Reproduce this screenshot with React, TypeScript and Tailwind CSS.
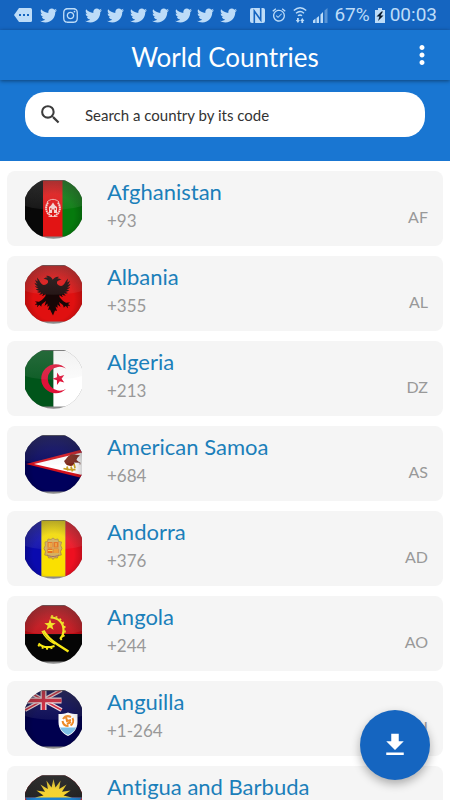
import { useId, useState } from "react";
import type { ReactNode } from "react";
import { FaInstagram, FaTwitter } from "react-icons/fa";
import { MdAlarmOn, MdMoreVert, MdSearch } from "react-icons/md";

interface Country {
  name: string;
  dial: string;
  code: string;
  flag: ReactNode;
}

const star = (cx: number, cy: number, r: number, turn = -90, points = 5, inner = 0.4) =>
  Array.from({ length: points * 2 }, (_, i) => {
    const a = ((turn + (i * 180) / points) * Math.PI) / 180;
    const d = i % 2 ? r * inner : r;
    return `${(cx + d * Math.cos(a)).toFixed(2)},${(cy + d * Math.sin(a)).toFixed(2)}`;
  }).join(" ");

const afghanistan = (
  <>
    <path fill="#080808" d="M0 0h18v58H0z" />
    <path fill="#e21414" d="M18 0h20v58H18z" />
    <path fill="#067a0d" d="M37.500 0H57v58H37.500z" />
    <g fill="none" stroke="#f6d5d2">
      <path strokeWidth="2" strokeDasharray="1.600 .5" d="M23 22.500c-3.500 5-2 11.500 4 13.500M33 22.500c3.500 5 2 11.500-4 13.500" />
      <path strokeWidth=".8" d="M22 22c3.500-3.500 8.500-3.500 12 0M23.500 36.500h9" />
    </g>
    <path fill="#f6d5d2" d="M24 33v-6l2-1.500 2-3 2 3 2 1.500v6z" />
    <path fill="#d42a25" d="M27 33v-3.500h2V33zM25.200 28h1.200v2h-1.200zM29.700 28h1.200v2h-1.200z" />
  </>
);

const albania = (
  <>
    <path fill="#e01010" d="M0 0h57v58H0z" />
    <path
      fill="#170606"
      d="M28 15c-2-4-5-4.500-7-4 1 .5 1.500 1 1.500 1.500-1.500-.3-3 .2-4 1.500 2 0 4 .5 4.500 2 .5 2-1 3.500-4 4-3.500-.5-4-4.500-7-7.500.2 2 .5 3 1 4-1.200-.5-2-1-2.800-2 .2 2 1 3.200 2.300 4.200-1.200 0-2-.4-3-1 .6 1.800 1.700 2.900 3.300 3.500-1.200.3-2 .2-3-.1 1.100 1.500 2.300 2.300 3.800 2.500-1 .5-1.800.7-3 .7 1.300 1.100 2.700 1.500 4 1.300-.8.8-1.500 1.200-2.600 1.500 1.400.7 2.900.7 4.100.2-.4 1-1 1.600-1.900 2.200 1.500.2 2.800-.2 3.900-1.100-.1 1-.4 1.700-1 2.500 1.400-.2 2.500-.9 3.300-2l.1 2c-2 2.500-3.500 4.500-6 5.600-1.800.6-3-.3-4.500.2 1 .3 1.500.8 2 1.500-1.100.2-1.700.8-2 2 1-.6 1.800-.6 2.600-.2-.5.7-.6 1.400-.2 2.300.6-1.200 1.300-1.800 2.400-2.200.3.7.8 1.200 1.700 1.400-.3-1.400.2-2.300 1.500-3.200l3-2.300-1.500 5 3-2.500v3.500l2-1.500-1.500 4.500 2-.5L28 50.500l2-5 2 .5-1.500-4.500 2 1.500v-3.500l3 2.500-1.500-5 3 2.300c1.300.9 1.800 1.800 1.500 3.200.9-.2 1.400-.7 1.700-1.400 1.100.4 1.800 1 2.400 2.200.4-.9.3-1.600-.2-2.300.8-.4 1.600-.4 2.600.2-.3-1.200-.9-1.800-2-2 .5-.7 1-1.200 2-1.500-1.500-.5-2.700.4-4.500-.2-2.500-1.100-4-3.100-6-5.600l.1-2c.8 1.100 1.900 1.800 3.300 2-.6-.8-.9-1.500-1-2.500 1.100.9 2.400 1.300 3.900 1.100-.9-.6-1.500-1.200-1.900-2.200 1.200.5 2.700.5 4.100-.2-1.100-.3-1.800-.7-2.600-1.500 1.300.2 2.700-.2 4-1.300-1.200 0-2-.2-3-.7 1.500-.2 2.700-1 3.800-2.500-1 .3-1.800.4-3 .1 1.600-.6 2.700-1.700 3.300-3.500-1 .6-1.800 1-3 1 1.300-1 2.100-2.200 2.300-4.200-.8 1-1.600 1.500-2.800 2 .5-1 .8-2 1-4-3 3-3.500 7-7 7.500-3-.5-4.500-2-4-4 .5-1.500 2.500-2 4.500-2-1-1.300-2.500-1.800-4-1.500 0-.5.500-1 1.500-1.500-2-.5-5 0-7 4z"
    />
  </>
);

const algeria = (
  <>
    <path fill="#00551a" d="M0 0h28.500v58H0z" />
    <path fill="#fff" d="M28.500 0H57v58H28.500z" />
    <path fill="#df1238" d="M41 18.500A14.500 14.500 0 1 0 41 39 12 12 0 1 1 41 18.500z" />
    <polygon fill="#df1238" points={star(34, 28.800, 6.500, 180)} />
  </>
);

const americanSamoa = (
  <>
    <path fill="#00005c" d="M0 0h57v58H0z" />
    <path fill="#d4111c" d="M1 29 57 14.500v28.500z" />
    <path fill="#fff" d="M9 29 57 17.500v22.500z" />
    <path fill="#7a2416" d="M39 26c2-1 3-5 7-6.500 3-.5 6 .5 9 1-2 1.500-3 2.500-3.500 4.500l2.500 2-4 .5c-1 2-2 3.500-4.500 3.500l-3-.8c-1.500-.2-2-1.500-3.500-4.200z" />
    <path fill="none" stroke="#c7a024" strokeWidth="1.800" d="M38.500 33.500c3 1 7 1.500 12 1M42 31.500l1 4M46 31.500l1.500 5M49 29l1 4" />
    <path stroke="#9f7b76" strokeWidth="1" d="M49 27.500h6v2" fill="none" />
  </>
);

const andorra = (
  <>
    <path fill="#0a0aae" d="M0 0h16.500v58H0z" />
    <path fill="#fae000" d="M16.500 0h24v58h-24z" />
    <path fill="#ee1020" d="M40.500 0H57v58H40.500z" />
    <path
      fill="#d6b15e"
      stroke="#a98542"
      strokeWidth=".8"
      d="M20 22l2.500-.5.5-2.500 3 .5 2-1.500 2 1.500 3-.5.5 2.500 3 .5-.8 3.500 1.300 3-1.500 3 .8 3.500-3 .5-1 2.500-2.500-.3-1.800 1.600-1.800-1.600-2.500.3-1-2.500-3-.5.8-3.500-1.500-3 1.300-3z"
    />
    <path fill="#e8701a" d="M22.500 22h5v5.500h-5zM28.500 22h5v5.500h-5zM22.500 28.500h5v4.500h-5zM28.500 28.500h5v4.500h-5z" />
    <path fill="none" stroke="#fbe65c" strokeWidth=".8" d="M24.200 23v4M26 23v4M23 30.500h4.500M29 30h4M29 32h4M31 23v3.500" />
    <path fill="none" stroke="#9a6f6b" strokeWidth="1" d="M22 35c4 2 8 2 12 0" />
  </>
);

const angola = (
  <>
    <path fill="#c40c14" d="M0 0h57v29H0z" />
    <path fill="#050505" d="M0 29h57v29H0z" />
    <g fill="none" stroke="#f8e814">
      <path strokeWidth="2.200" d="M25.500 12.500C34 12.500 39 18.500 38.500 26c-.2 3-1.200 6-3.500 8" />
      <path strokeWidth="1.600" strokeDasharray="2 2.500" d="M26 11c9 0 14.500 7 14 15-.2 4-2 7-4.500 9" />
      <path strokeWidth="2.200" d="M13.500 38.500c4 4 10 4.500 16 2.500" />
      <path strokeWidth="1.600" strokeDasharray="2 2.500" d="M13 40c4 4 10 5 16 2.500" />
      <path strokeWidth="2.400" d="M18.500 25.500c3 6 8 10 14 14l11 7" />
      <path strokeWidth="1.400" d="M17 26c3 7 7 10 13 13" />
    </g>
    <polygon fill="#f8e814" points={star(25, 20, 6)} />
  </>
);

const anguilla = (
  <>
    <path fill="#00004f" d="M0 0h57v58H0z" />
    <g fill="none">
      <path stroke="#f5dfe2" strokeWidth="4" d="M0 0l36.500 20M36.500 0L0 20" />
      <path stroke="#d51b32" strokeWidth="1.500" d="M0 0l36.500 20M36.500 0L0 20" />
      <path stroke="#f5dfe2" strokeWidth="6" d="M18.500 0v20M0 10.500h36.500" />
      <path stroke="#d51b32" strokeWidth="3.400" d="M18.500 0v20M0 10.500h36.500" />
    </g>
    <path fill="#fff" d="M33.500 24c3.500 0 6.500-.5 9.500-1.500 3 1 6 1.500 9.500 1.500v8c0 7-4 11.500-9.500 14-5.500-2.500-9.500-7-9.500-14z" />
    <path fill="#7dc0e8" d="M35 37.500h16c-1.500 3.500-4.500 6-8 7.500-3.500-1.500-6.500-4-8-7.500z" />
    <path fill="none" stroke="#ee8a28" strokeWidth="2" d="M38 29c2-3 5-3.500 8-2M47.500 28c1.500 3 .5 6-2 7.500M43.500 36c-3.500 0-5.500-2-6-5M41 27l1 4 4-1M46 32l-4 2" />
  </>
);

const antigua = (
  <>
    <path fill="#e01a2b" d="M0 0h57v58H0z" />
    <path fill="#111" d="M0 0h57v22.500H0z" />
    <polygon fill="#fbd51c" points={star(28.500, 22.500, 18.500, -90, 16, 0.55)} />
    <path fill="#0c7bd0" d="M0 22.500h57l-10 14H10z" />
    <path fill="#fff" d="M10 36.500h37L28.500 58z" />
  </>
);

const countries: Country[] = [
  { name: "Afghanistan", dial: "+93", code: "AF", flag: afghanistan },
  { name: "Albania", dial: "+355", code: "AL", flag: albania },
  { name: "Algeria", dial: "+213", code: "DZ", flag: algeria },
  { name: "American Samoa", dial: "+684", code: "AS", flag: americanSamoa },
  { name: "Andorra", dial: "+376", code: "AD", flag: andorra },
  { name: "Angola", dial: "+244", code: "AO", flag: angola },
  { name: "Anguilla", dial: "+1-264", code: "AI", flag: anguilla },
  { name: "Antigua and Barbuda", dial: "+1-268", code: "AG", flag: antigua },
];

// Glossy round badge, cut flat where the square flag image ends
function Flag({ children }: { children: ReactNode }) {
  const id = useId();
  return (
    <svg viewBox="0 0 57 59" className="mt-[2px] h-[59px] w-[57px] shrink-0" aria-hidden="true">
      <defs>
        <clipPath id={`${id}c`}>
          <circle cx="28.500" cy="28.500" r="30.300" />
        </clipPath>
        <linearGradient id={`${id}g`} x1="0" y1="0" x2="0" y2="1">
          <stop offset="0" stopColor="#bbb" stopOpacity=".2" />
          <stop offset="1" stopColor="#ccc" stopOpacity=".08" />
        </linearGradient>
        <radialGradient id={`${id}v`} cx=".5" cy=".6" r=".65">
          <stop offset=".55" stopColor="#000" stopOpacity="0" />
          <stop offset="1" stopColor="#000" stopOpacity=".35" />
        </radialGradient>
      </defs>
      <g clipPath={`url(#${id}c)`}>
        <path fill="#8b8b8b" d="M0 0h57v59H0z" />
        <svg width="57" height="56" y="0.500" viewBox="0 0.500 57 56">
          {children}
          {children !== algeria && <path fill={`url(#${id}v)`} d="M0 0h57v58H0z" />}
          <path fill={`url(#${id}g)`} d="M0 0h57v26c-18 5-40 5-57 0z" />
        </svg>
        <path stroke="#555" strokeOpacity=".6" d="M0 .5h57" />
      </g>
    </svg>
  );
}

function StatusBar() {
  return (
    <div className="flex h-[30px] shrink-0 items-center justify-between bg-[#1565c0] pl-[14px] pr-[13px] text-[#bddcf8]">
      <div className="flex w-[223px] items-center justify-between">
        <svg viewBox="0 0 18 14" className="mr-[2px] h-[14px] w-[18px]" aria-hidden="true">
          <path fill="currentColor" d="M5 0h11.500Q18 0 18 1.500v11q0 1.500-1.500 1.500H5L0 7z" />
          <path fill="#1565c0" d="M5 6h2v2H5zM9 6h2v2H9zM13 6h2v2h-2z" />
        </svg>
        <FaTwitter size={17} />
        <FaInstagram size={17} />
        {[1, 2, 3, 4, 5, 6, 7].map((n) => (
          <FaTwitter key={n} size={17} />
        ))}
      </div>
      <div className="flex items-center gap-[6px]">
        <svg viewBox="0 0 15 15" className="size-[15px]" aria-hidden="true">
          <rect width="15" height="15" rx="2" fill="currentColor" />
          <path fill="none" stroke="#1565c0" strokeWidth="1.600" d="M4.300 15V3l6.400 9V0" />
        </svg>
        <MdAlarmOn size={16} />
        <svg viewBox="0 0 14 16" className="h-4 w-[14px]" aria-hidden="true">
          <g fill="none" stroke="currentColor" strokeWidth="1.400">
            <path d="M.8 3.500c4-3.500 8.500-3.500 12.400 0M3 6.200c2.700-2.200 5.500-2.200 8 0M5 8.700c1.400-1 2.700-1 4 0" />
          </g>
          <path fill="currentColor" d="M4 11h1.800v2H7l-2.100 3-2.100-3H4zM8.400 16h1.800v-2h1.200L9.300 11l-2.100 3h1.200z" />
        </svg>
        <svg viewBox="0 0 15 15" className="size-[15px]" aria-hidden="true">
          <path fill="currentColor" d="M0 12.500L2.500 10.500V15H0zM3.500 10L6 8v7H3.500zM7.500 6.500L10 4v11H7.500z" />
          <path fill="currentColor" opacity=".4" d="M11.500 2.500L14.500 0v15h-3z" />
        </svg>
        <span className="flex items-center gap-[5px] font-[Roboto,sans-serif] text-[19px] leading-6">
          67%
          <svg viewBox="0 0 10 15" className="h-[15px] w-[10px]" aria-hidden="true">
            <path fill="currentColor" d="M3 0h4v2h3v13H0V2h3z" />
            <path fill="#06182c" d="M6.500 3.500L1.500 8.500h3L3 13l5.500-5.500h-3L8 3.500z" />
          </svg>
          00:03
        </span>
      </div>
    </div>
  );
}

export default function App() {
  const [query, setQuery] = useState("");
  const shown = countries.filter((c) => (c.dial + c.code).toLowerCase().includes(query.trim().toLowerCase()));

  return (
    <div className="relative flex h-screen flex-col overflow-hidden bg-white font-[Lato,sans-serif] [font-variant-ligatures:none]">
      <StatusBar />

      <header className="z-10 grid h-[50px] shrink-0 grid-cols-[40px_1fr_40px] items-center bg-[#1976d2] px-2 text-white shadow-[0_1px_4px_rgba(0,0,0,0.45)]">
        <h1 className="col-start-2 pt-1 text-center text-[26px] leading-8">World Countries</h1>
        <button type="button" aria-label="More options" className="flex justify-center">
          <MdMoreVert size={30} />
        </button>
      </header>

      <div className="shrink-0 bg-[#1976d2] px-[25px] pb-6 pt-3">
        <label className="flex h-[45px] items-center gap-[22px] rounded-[20px] bg-white pl-[13px] pr-5">
          <MdSearch size={25} className="shrink-0 text-[#3c3c3c]" />
          <input
            type="text"
            value={query}
            onChange={(e) => setQuery(e.target.value)}
            placeholder="Search a country by its code"
            aria-label="Search a country by its code"
            className="w-full text-[15px] leading-5 text-[#333] outline-none placeholder:text-[#333]"
          />
        </label>
      </div>

      <ul className="flex min-h-0 flex-1 flex-col gap-[10px] overflow-y-auto px-[7px] pt-[10px] [scrollbar-width:none]">
        {shown.map((c) => (
          <li key={c.code} className="flex h-[75px] shrink-0 rounded-lg bg-[#f5f5f5] pl-[18px] pr-[15px] pt-[7px]">
            <Flag>{c.flag}</Flag>
            <div className="ml-[25px] flex-1">
              <h2 className="text-[22px] leading-7 text-[#1b7fba]">{c.name}</h2>
              <p className="text-[17px] leading-[30px] text-[#999]">{c.dial}</p>
            </div>
            <span className="pt-6 text-[16px] leading-[30px] text-[#999]">{c.code}</span>
          </li>
        ))}
      </ul>

      <button
        type="button"
        aria-label="Download"
        className="absolute bottom-5 right-5 flex size-[70px] items-center justify-center rounded-full bg-[#1565c0] text-white shadow-[0_4px_10px_rgba(0,0,0,0.3)]"
      >
        <svg viewBox="0 0 24 24" className="size-[30px]" fill="currentColor" aria-hidden="true">
          <path d="M19 9h-4V3H9v6H5l7 7 7-7zM5 18v2h14v-2H5z" />
        </svg>
      </button>
    </div>
  );
}
